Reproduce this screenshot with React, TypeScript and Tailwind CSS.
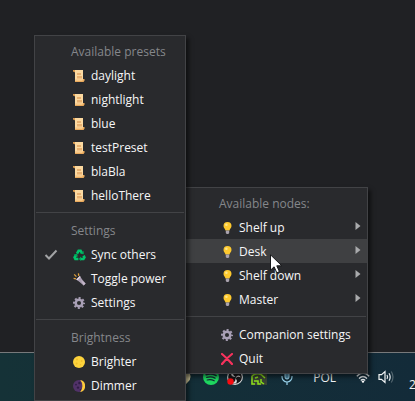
import type { ReactNode } from "react";

function ScrollIcon() {
  return (
    <svg width="12" height="12" viewBox="0 0 12 12" aria-hidden="true">
      <path d="M0 0h3v2.200H1.400L0 1.400z" fill="#d99a4e" />
      <path d="M2 0h8v11H2z" fill="#fcd9a0" />
      <path d="M4 3h4v2H4zM4 6h5v2.600H4z" fill="#e8b070" />
      <path d="M2 9.800h8V9h1.500v1.800L10.500 12H2z" fill="#e9a95c" />
      <path d="M2 10.200h7.500v.8H2z" fill="#f9cf90" />
    </svg>
  );
}

function RecycleIcon() {
  return (
    <svg width="13" height="12" viewBox="0 0 13 12" aria-hidden="true">
      <g fill="none" stroke="#00c46a" strokeWidth="2.6">
        <path d="M4 4.6 5.6 1.8h2L9 4.2" />
        <path d="M10.6 6.6 11.4 8.4 10.4 10H7.6" />
        <path d="M5.4 10H2.4L1.6 8.4 3 6.2" />
      </g>
      <path d="M7.2 4.8 10.8 5.2 10.6 1.9zM8 7.6 5.8 10 8 12zM.6 5.8 4.2 4.6 4.8 7.8z" fill="#00a85a" />
    </svg>
  );
}

function FlashlightIcon() {
  return (
    <svg width="13" height="13" viewBox="0 0 13 13" aria-hidden="true">
      <path d="M.6 5.4 3 5.8M1.2 1.4 3.4 3.6M5.4.4 5.8 2.8" stroke="#e0a13c" strokeWidth="1.3" />
      <path d="M3.2 6.4 6.8 3l2.4 3.4 3.4 4-2 2-4-3.4z" fill="#a99db0" />
      <path d="M3.2 6.4 6.8 3l.9 1.1-3.4 3.2z" fill="#e2d8e5" />
      <path d="m8 7 4.6 3.4-2 2z" fill="#c4b7ca" />
    </svg>
  );
}

function GearIcon() {
  return (
    <svg width="12" height="12" viewBox="0 0 12 12" aria-hidden="true">
      <circle cx="6" cy="6" r="5" fill="none" stroke="#a9a0b6" strokeWidth="2" strokeDasharray="2 1.927" strokeDashoffset="1" />
      <circle cx="6" cy="6" r="3.3" fill="none" stroke="#a9a0b6" strokeWidth="2.5" />
    </svg>
  );
}

function FullMoonIcon() {
  return (
    <svg width="12" height="12" viewBox="0 0 12 12" aria-hidden="true">
      <circle cx="6" cy="6" r="6" fill="#fdd33c" />
      <g fill="#f0bd2c">
        <circle cx="4" cy="3.4" r="1" />
        <circle cx="8.6" cy="5" r=".9" />
        <circle cx="3.6" cy="7.6" r="1" />
        <circle cx="7.4" cy="8.8" r=".8" />
      </g>
    </svg>
  );
}

function CrescentIcon() {
  return (
    <svg width="12" height="12" viewBox="0 0 12 12" aria-hidden="true">
      <circle cx="6" cy="6" r="6" fill="#513268" />
      <path d="M7.2.1A6 6 0 0 1 7.2 11.9Q9.4 9.4 9.4 6T7.2.1z" fill="#fdcb3a" />
      <g fill="#2f1c45">
        <circle cx="6.4" cy="3" r="1.2" />
        <circle cx="3" cy="4.6" r=".9" />
        <circle cx="5" cy="7.6" r="1.2" />
        <circle cx="7.4" cy="9.8" r=".8" />
      </g>
    </svg>
  );
}

function BulbIcon() {
  return (
    <svg width="9" height="12" viewBox="0 0 9 12" aria-hidden="true">
      <path d="M4.5 0a4 4 0 0 1 4 4c0 2-1.600 2.600-2 4.600h-4C2.100 6.600.5 6 .5 4a4 4 0 0 1 4-4z" fill="#fdc92f" />
      <circle cx="3.400" cy="2.700" r="1.300" fill="#fee68a" />
      <path d="M2.800 8.600h3.400v2.300l-.9 1.100H3.700l-.9-1.100z" fill="#aaa3ae" />
    </svg>
  );
}

function CrossIcon() {
  return (
    <svg width="12" height="12" viewBox="0 0 12 12" aria-hidden="true">
      <path d="M1 1Q6 5 11 11M11 1Q5 5.600 1 11" fill="none" stroke="#f7325c" strokeWidth="2.200" strokeLinecap="round" />
    </svg>
  );
}

function Heading({ children }: { children: ReactNode }) {
  return <div className="flex h-6 items-center pt-0.5 pl-9 text-[#85878b]">{children}</div>;
}

function Divider() {
  return <div role="separator" className="mx-px my-[5px] h-px bg-[#424346]" />;
}

type ItemProps = {
  icon: ReactNode;
  label: string;
  checked?: boolean;
  submenu?: boolean;
  active?: boolean;
};

function Item({ icon, label, checked, submenu, active }: ItemProps) {
  return (
    <button
      type="button"
      role={checked ? "menuitemcheckbox" : "menuitem"}
      aria-checked={checked}
      aria-haspopup={submenu ? "menu" : undefined}
      className={`flex h-6 w-full items-center pt-0.5 text-left text-[#f6f6f7] ${active ? "bg-[#3f4042]" : ""}`}
    >
      <span className="flex w-9 justify-center pr-1">
        {checked && (
          <svg width="14" height="12" viewBox="0 0 14 12" aria-hidden="true">
            <path d="M1.500 6 5 9.500 12.500 1.500" fill="none" stroke="#a2a3a5" strokeWidth="2" />
          </svg>
        )}
      </span>
      <span className="flex w-4 justify-center">{icon}</span>
      <span className="flex-1 pl-1 whitespace-nowrap">{label}</span>
      {submenu && (
        <svg className="mr-1.5 mb-1" width="6" height="8" viewBox="0 0 6 8" aria-hidden="true">
          <path d="M.5 0 5.500 4 .5 8z" fill="#a9aaac" />
        </svg>
      )}
    </button>
  );
}

const presets = ["daylight", "nightlight", "blue", "testPreset", "blaBla", "helloThere"];

const menuClass =
  "absolute border border-[#424346] bg-[#292a2d] py-[3px] shadow-[3px_3px_4px_rgba(0,0,0,0.5)]";

function NodesMenu() {
  return (
    <div role="menu" aria-label="Available nodes" className={`${menuClass} top-[187px] left-[182px] w-[186px]`}>
      <Heading>Available nodes:</Heading>
      <Item icon={<BulbIcon />} label="Shelf up" submenu />
      <Item icon={<BulbIcon />} label="Desk" submenu active />
      <Item icon={<BulbIcon />} label="Shelf down" submenu />
      <Item icon={<BulbIcon />} label="Master" submenu />
      <Divider />
      <Item icon={<GearIcon />} label="Companion settings" />
      <Item icon={<CrossIcon />} label="Quit" />
    </div>
  );
}

function DeskMenu() {
  return (
    <div role="menu" aria-label="Desk" className={`${menuClass} top-[35px] left-[34px] w-[152px]`}>
      <Heading>Available presets</Heading>
      {presets.map((name) => (
        <Item key={name} icon={<ScrollIcon />} label={name} />
      ))}
      <Divider />
      <Heading>Settings</Heading>
      <Item icon={<RecycleIcon />} label="Sync others" checked />
      <Item icon={<FlashlightIcon />} label="Toggle power" />
      <Item icon={<GearIcon />} label="Settings" />
      <Divider />
      <Heading>Brightness</Heading>
      <Item icon={<FullMoonIcon />} label="Brighter" />
      <Item icon={<CrescentIcon />} label="Dimmer" />
    </div>
  );
}

function Taskbar() {
  return (
    <footer className="flex h-[49px] items-center justify-end overflow-hidden border-t border-[#77797b] bg-linear-to-r from-[#153237] to-[#132b39] text-[#f0f3f5]">
      <svg className="mr-3 shrink-0" width="16" height="16" viewBox="0 0 16 16" aria-hidden="true">
        <path d="M8 0a7.500 7.500 0 0 1 5 13l-3 3H6l-3-3A7.500 7.500 0 0 1 8 0z" fill="#ddd3a4" />
      </svg>
      <svg className="mr-2 shrink-0" width="16" height="16" viewBox="0 0 16 16" aria-label="Spotify" role="img">
        <circle cx="8" cy="8" r="8" fill="#1ed760" />
        <g fill="none" stroke="#132d33" strokeLinecap="round">
          <path d="M3.200 5.600Q8.500 4 13 6.600" strokeWidth="1.700" />
          <path d="M3.800 8.400Q8.300 7.100 12 9.200" strokeWidth="1.400" />
          <path d="M4.200 11Q8 10 11.200 11.800" strokeWidth="1.200" />
        </g>
      </svg>
      <svg className="mr-2 shrink-0" width="16" height="16" viewBox="0 0 16 16" aria-label="OBS" role="img">
        <circle cx="8" cy="8" r="7.400" fill="#17171a" stroke="#d9d9da" strokeWidth="1.100" />
        <g fill="#d9d9da">
          <path d="M7 2.200a3 3 0 0 0 1.500 5.200Q4.500 8.500 4 5 4.500 3 7 2.200z" />
          <path d="M13.600 8.500a3 3 0 0 0-5 1.600Q8.800 6.200 12 6.400q1.500.6 1.600 2.100z" />
          <path d="M5 13.500a3 3 0 0 0 3.200-4.200q3 2.600.8 4.900-2.200.8-4-.7z" />
        </g>
        <circle cx="3.500" cy="12.500" r="3.200" fill="#f90d12" />
      </svg>
      <svg className="mr-3.5 shrink-0" width="16" height="16" viewBox="0 0 16 16" aria-label="NVIDIA" role="img">
        <path d="M0 0h16v16H0z" fill="#394234" />
        <path d="M1 7Q5 3.500 10 5.500L14 9M1 7v8h3M4 9l3-1M3 12h4v3h3M10 10v3l3 2" fill="none" stroke="#8be01c" strokeWidth="1.500" />
      </svg>
      <svg className="mr-5 shrink-0" width="12" height="16" viewBox="0 0 12 16" aria-label="Microphone" role="img">
        <rect x="4" y="1" width="4" height="9" rx="2" fill="#4f8ba8" stroke="#a7dcf2" />
        <path d="M1 7v1a5 5 0 0 0 10 0V7M6 13v3" fill="none" stroke="#9bd5ee" strokeWidth="1.200" />
      </svg>
      <span className="mr-5 pt-px text-[12px]">POL</span>
      <svg className="mr-2 shrink-0" width="14" height="12" viewBox="0 0 14 12" aria-label="Wi-Fi" role="img">
        <g fill="none" stroke="#e9edf0" strokeWidth="1.300">
          <path d="M.8 5.200Q7-1.200 13.200 5.200" />
          <path d="M3 7.500Q7 3.500 11 7.500" />
          <path d="M4.800 9.500Q7 7.200 9.200 9.500" />
        </g>
        <circle cx="7" cy="10.600" r="1.200" fill="#fff" />
      </svg>
      <svg className="mr-3.5 shrink-0" width="17" height="14" viewBox="0 0 17 14" aria-label="Volume" role="img">
        <path d="M1 4.600h2.500L7 1.500v11L3.500 9.400H1z" fill="none" stroke="#f2f5f6" strokeWidth="1.200" />
        <path d="M9 5q1.200 2 0 4M11 3.200q2.400 3.800 0 7.600" fill="none" stroke="#e9edf0" strokeWidth="1.200" />
        <path d="M13.300 1.500q3.400 5.500 0 11" fill="none" stroke="#53666f" strokeWidth="1.200" />
      </svg>
      <span className="w-1.5 shrink-0 overflow-hidden pt-4 text-[12px]">2</span>
    </footer>
  );
}

export default function App() {
  return (
    <main className="relative flex min-h-screen flex-col justify-end overflow-hidden bg-[#202124] font-['Open_Sans','Noto_Sans',sans-serif] text-[12px] leading-4">
      <Taskbar />
      <NodesMenu />
      <DeskMenu />
      <svg className="absolute top-[254px] left-[270px]" width="13" height="20" viewBox="0 0 13 20" aria-hidden="true">
        <path d="M.5.8v15.400l3.600-3.400 2.700 6 2.600-1.200-2.600-5.800h5z" fill="#fff" stroke="#17181a" />
      </svg>
    </main>
  );
}
